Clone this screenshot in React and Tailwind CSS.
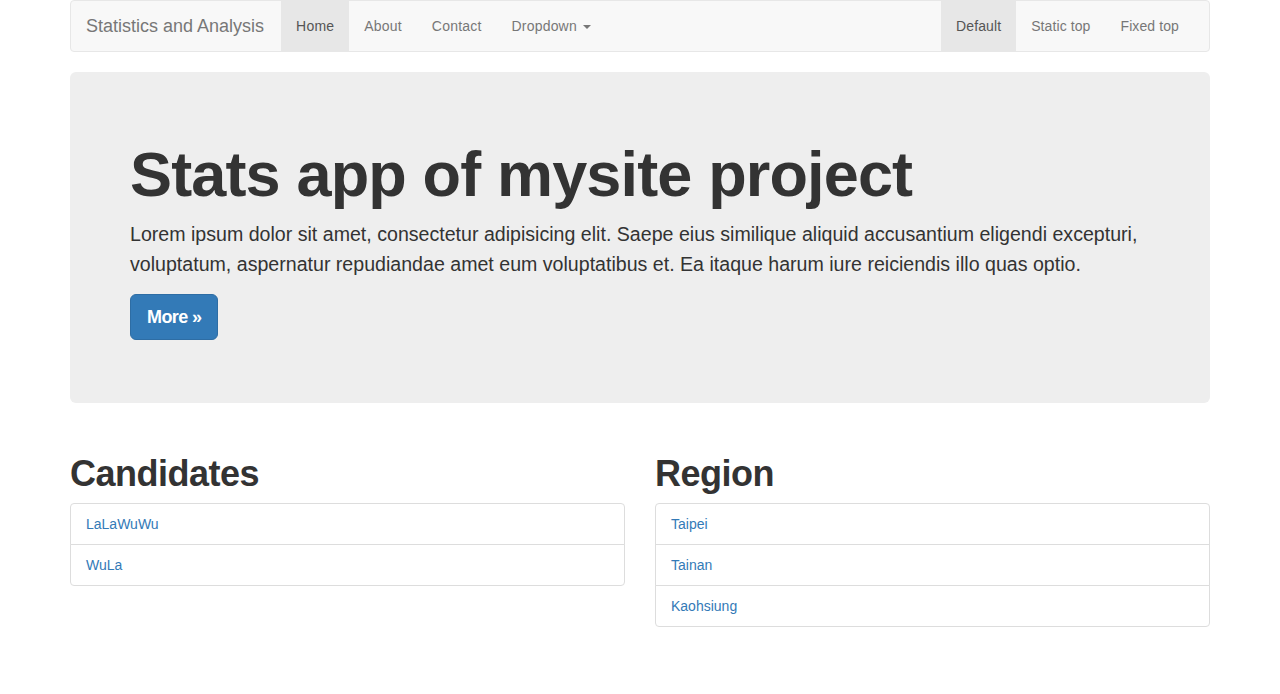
import React from 'react';

const NAV_LEFT = ['Home', 'About', 'Contact'];
const NAV_RIGHT = ['Default', 'Static top', 'Fixed top'];
const CANDIDATES = ['LaLaWuWu', 'WuLa'];
const REGIONS = ['Taipei', 'Tainan', 'Kaohsiung'];

// Bootstrap-style list group with overlapping borders.
function ListGroup({ items }) {
    return (
        <div className="flex flex-col">
            {items.map((item, i) => (
                <a
                    key={item}
                    href="#"
                    className={`block px-[15px] py-[10px] border border-[#ddd] bg-white text-[#337ab7] text-[14px] leading-[20px] ${
                        i > 0 ? '-mt-px' : 'rounded-t-[4px]'
                    } ${i === items.length - 1 ? 'rounded-b-[4px]' : ''}`}
                >
                    {item}
                </a>
            ))}
        </div>
    );
}

export default function App() {
    return (
        <div className="min-h-[694px] bg-white text-[#333] text-[14px] leading-[20px] font-['Liberation_Sans',Arial,sans-serif]">
            <div className="w-[1140px] mx-auto">
                {/* Navbar */}
                <nav className="flex items-stretch justify-between h-[52px] bg-[#f8f8f8] border border-[#e7e7e7] rounded-[4px] mb-[20px]">
                    <div className="flex items-stretch">
                        <a href="#" className="flex items-center pl-[15px] pr-[17px] text-[18px] text-[#777]">Statistics and Analysis</a>
                        {NAV_LEFT.map((item, i) => (
                            <a
                                key={item}
                                href="#"
                                className={`flex items-center px-[15px] tracking-[0.2px] ${i === 0 ? 'bg-[#e7e7e7] text-[#555]' : 'text-[#777]'}`}
                            >
                                {item}
                            </a>
                        ))}
                        <a href="#" className="flex items-center px-[15px] tracking-[0.2px] text-[#777]">
                            Dropdown
                            <span className="ml-[6px] mt-[2px] w-0 h-0 border-x-[4px] border-x-transparent border-t-[4px] border-t-[#777]" />
                        </a>
                    </div>
                    <div className="flex items-stretch mr-[15px]">
                        {NAV_RIGHT.map((item, i) => (
                            <a
                                key={item}
                                href="#"
                                className={`flex items-center px-[15px] tracking-[0.1px] ${i === 0 ? 'bg-[#e7e7e7] text-[#555]' : 'text-[#777]'}`}
                            >
                                {item}
                            </a>
                        ))}
                    </div>
                </nav>

                {/* Jumbotron */}
                <div className="bg-[#eee] rounded-[6px] px-[60px] py-[48px] mb-[30px]">
                    <h1 className="mt-[20px] mb-[10px] text-[63px] leading-[1.1] font-bold tracking-[-0.85px]">Stats app of mysite project</h1>
                    <p className="mb-[15px] text-[19.6px] leading-[30px] text-[#333]">
                        Lorem ipsum dolor sit amet, consectetur adipisicing elit. Saepe eius similique aliquid accusantium eligendi excepturi, voluptatum, aspernatur repudiandae amet eum voluptatibus et. Ea itaque harum iure reiciendis illo quas optio.
                    </p>
                    <p className="mb-[15px]">
                        <a href="#" className="inline-block px-[16px] py-[10px] text-[18px] leading-[24px] font-bold tracking-[-0.6px] text-white bg-[#337ab7] border border-[#2e6da4] rounded-[6px]">
                            More »
                        </a>
                    </p>
                </div>

                {/* Lists */}
                <div className="grid grid-cols-2 gap-[30px]">
                    <div>
                        <h2 className="mt-[24px] mb-[13px] text-[36px] leading-[33px] font-bold tracking-[-0.5px]">Candidates</h2>
                        <ListGroup items={CANDIDATES} />
                    </div>
                    <div>
                        <h2 className="mt-[24px] mb-[13px] text-[36px] leading-[33px] font-bold tracking-[-0.5px]">Region</h2>
                        <ListGroup items={REGIONS} />
                    </div>
                </div>
            </div>
        </div>
    );
}
